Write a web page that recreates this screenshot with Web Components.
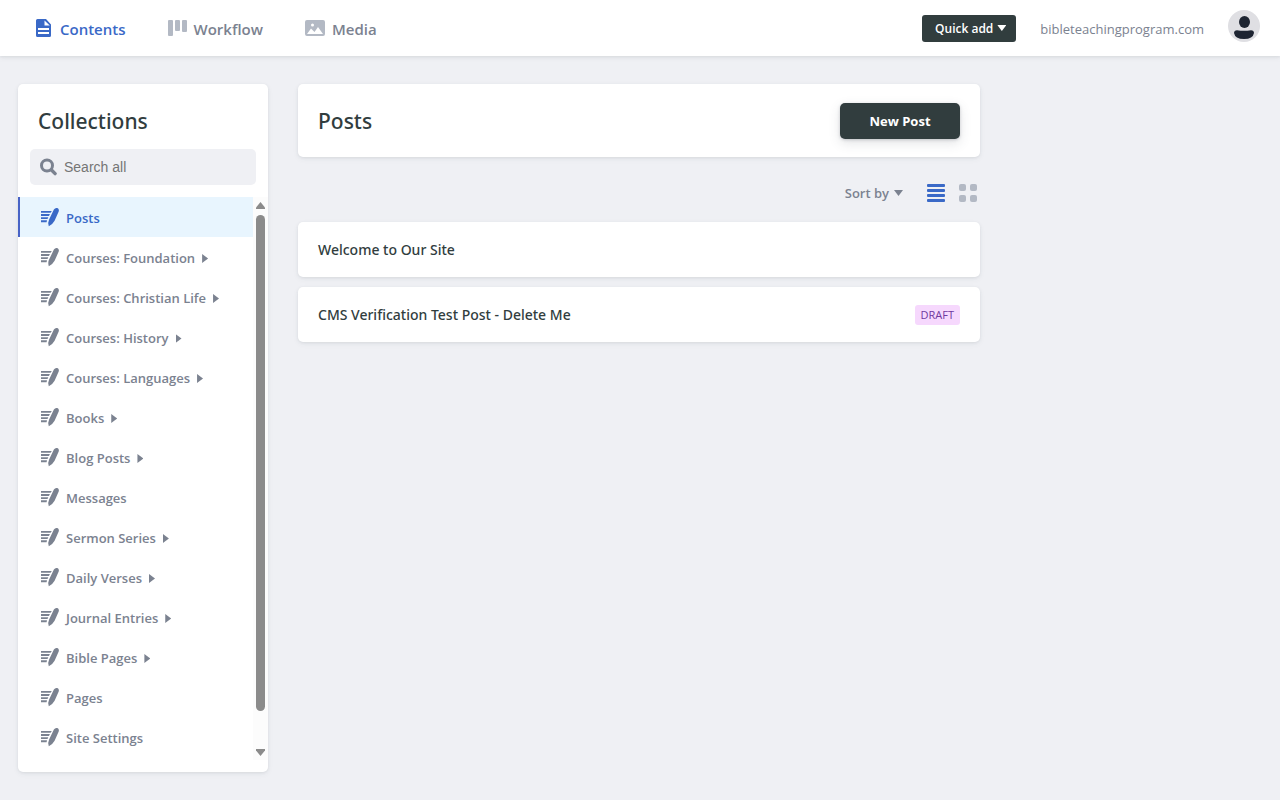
<!DOCTYPE html>
<html lang="en">
<head>
<meta charset="utf-8">
<meta name="viewport" content="width=device-width, initial-scale=1">
<title>Contents</title>
<style>
  :root {
    --font: "Open Sans", "Noto Sans", sans-serif;
    --font-medium: "Noto Sans", "Open Sans", sans-serif;
    --lead: #313d3e;
    --text: #7b8290;
    --muted: #b3b9c4;
    --active: #3a69c7;
    --active-bg: #e8f5fe;
    --bg: #eff0f4;
    --card-shadow: 0 2px 6px 0 rgba(68, 74, 87, 0.05), 0 1px 3px 0 rgba(68, 74, 87, 0.1);
  }

  body {
    margin: 0;
    background: var(--bg);
    color: var(--text);
    font-family: var(--font);
    font-size: 14px;
  }
</style>
</head>
<body>
<cms-app></cms-app>

<script>
const icons = {
    page: `<svg width="17" height="18" viewBox="0 0 17 18"><path fill="currentColor" fill-rule="evenodd" d="M2 0h8l5 5.500V16.500a1.500 1.500 0 0 1-1.500 1.500h-12A1.500 1.500 0 0 1 0 16.500v-15A1.500 1.500 0 0 1 1.500 0zM8.500 1.500V6.500H13.800zM2 9v2h11V9zM2 13v2h11v-2z"/></svg>`,
    workflow: `<svg width="19" height="18" viewBox="0 0 19 18" fill="currentColor"><rect x="0" y="1" width="5" height="16" rx="1"/><rect x="7" y="1" width="5" height="11" rx="1"/><rect x="14" y="1" width="5" height="12" rx="1"/></svg>`,
    media: `<svg width="20" height="18" viewBox="0 0 20 18"><path fill="currentColor" fill-rule="evenodd" d="M2 1h16a2 2 0 0 1 2 2v12a2 2 0 0 1-2 2H2a2 2 0 0 1-2-2V3a2 2 0 0 1 2-2zm5.500 3.500a1.500 1.500 0 1 0 0 3 1.500 1.500 0 0 0 0-3zM2 15h16l-5-7-3.500 5L6 9.500z"/></svg>`,
    write: `<svg width="20" height="20" viewBox="0 0 20 20"><path fill="currentColor" d="M1 3.900h10.800l-1.200 1.900H1zM1 7.100h8.900l-.9 1.900H1zM1 10.200h7.300l-.8 1.900H1zM1 13.300h6l-.4 1.900H1z"/><path fill="currentColor" d="M13.900 2.600Q15.300.4 17.200 1.100 19.500 2.100 18.700 4.600L14.600 13.800Q12.800 17.300 8.800 19.200 7.600 15.500 9.200 12.300z"/></svg>`,
    search: `<svg width="18" height="18" viewBox="0 0 18 18" fill="none" stroke="currentColor"><circle cx="7" cy="7.500" r="5.500" stroke-width="3"/><path d="M11.500 12l3.600 3.600" stroke-width="3.400" stroke-linecap="round"/></svg>`,
    list: `<svg width="18" height="18" viewBox="0 0 18 18" fill="currentColor"><rect width="18" height="3" rx="1"/><rect y="5" width="18" height="3" rx="1"/><rect y="10" width="18" height="3" rx="1"/><rect y="15" width="18" height="3" rx="1"/></svg>`,
    grid: `<svg width="18" height="18" viewBox="0 0 18 18" fill="currentColor"><rect width="7" height="7" rx="2"/><rect x="11" width="7" height="7" rx="2"/><rect y="11" width="7" height="7" rx="2"/><rect x="11" y="11" width="7" height="7" rx="2"/></svg>`,
    user: `<svg width="32" height="32" viewBox="0 0 32 32"><circle cx="16" cy="16" r="16" fill="#dfdfe3"/><ellipse cx="16.500" cy="12" rx="5.500" ry="6" fill="#1e2532"/><path fill="#1e2532" d="M6 23Q6 20.500 9 20.200 16 21.500 23 20.200 26 20.500 26 23 25 29 16 29T6 23z"/></svg>`
};

const baseStyle = `
    * { box-sizing: border-box; }
    :host { display: block; }
    svg { display: block; flex-shrink: 0; }
    h1, h2, ul { margin: 0; padding: 0; font-weight: 500; }
    h1, h2 { font-family: var(--font-medium); }
    button { font: inherit; border: 0; margin: 0; cursor: pointer; }
    a { color: inherit; text-decoration: none; }
    .caret-down::after, .caret-right::after {
      content: "";
      background: currentColor;
      flex-shrink: 0;
    }
    .caret-down::after { width: 9px; height: 6px; clip-path: polygon(0 0, 100% 0, 50% 100%); }
    .caret-right::after { width: 6px; height: 9px; clip-path: polygon(0 0, 100% 50%, 0 100%); }
`;

class CmsElement extends HTMLElement {
    constructor() {
        super();
        this.attachShadow({ mode: 'open' });
    }

    connectedCallback() {
        this.shadowRoot.innerHTML = `<style>${baseStyle}${this.styles()}</style>${this.render()}`;
    }

    styles() {
        return '';
    }

    render() {
        return '<slot></slot>';
    }
}

class CmsNavLink extends CmsElement {
    styles() {
        return `
      a {
        display: flex;
        align-items: center;
        height: 56px;
        font-size: 15px;
        line-height: 20px;
        font-weight: 600;
      }
      .icon { color: var(--muted); margin-right: 7px; }
      .label { padding-top: 2px; }
      :host([active]) a, :host([active]) .icon { color: var(--active); }
    `;
    }

    render() {
        const current = this.hasAttribute('active') ? 'aria-current="page"' : '';
        return `<a href="#${this.getAttribute('icon')}" ${current}>
      <span class="icon">${icons[this.getAttribute('icon')]}</span>
      <span class="label"><slot></slot></span>
    </a>`;
    }
}

class CmsHeader extends CmsElement {
    styles() {
        return `
      header {
        display: flex;
        justify-content: space-between;
        height: 56px;
        padding: 0 20px 0 36px;
        background: #fff;
        box-shadow: var(--card-shadow);
      }
      nav, .actions { display: flex; align-items: center; }
      nav { gap: 42px; }
      .actions { gap: 24px; }
      .quick {
        display: flex;
        align-items: center;
        gap: 4px;
        height: 27px;
        padding: 0 10px 0 13px;
        border-radius: 3px;
        background: var(--lead);
        color: #fff;
        font-size: 12px;
        font-weight: 600;
      }
      .site { font-size: 13px; line-height: 20px; padding-top: 2px; }
      .avatar { padding: 0 0 4px; background: none; }
    `;
    }

    render() {
        return `<header>
      <nav>
        <cms-nav-link icon="page" active>Contents</cms-nav-link>
        <cms-nav-link icon="workflow">Workflow</cms-nav-link>
        <cms-nav-link icon="media">Media</cms-nav-link>
      </nav>
      <div class="actions">
        <button class="quick caret-down" type="button">Quick add</button>
        <a class="site" href="#site">bibleteachingprogram.com</a>
        <button class="avatar" type="button" aria-label="Account">${icons.user}</button>
      </div>
    </header>`;
    }
}

class CmsCollection extends CmsElement {
    styles() {
        return `
      a {
        display: flex;
        align-items: center;
        height: 40px;
        padding: 0 12px 0 20px;
        border-left: 2px solid transparent;
        font-size: 13px;
        line-height: 20px;
        font-weight: 600;
      }
      .label { margin-left: 6px; padding-top: 2px; }
      .caret-right::after { margin: 3px 0 0 7px; }
      :host([active]) a {
        border-left-color: #4863c6;
        background: var(--active-bg);
        color: var(--active);
      }
    `;
    }

    render() {
        const caret = this.hasAttribute('nested') ? 'class="caret-right"' : '';
        return `<a href="#collection" ${caret}>${icons.write}<span class="label"><slot></slot></span></a>`;
    }
}

class CmsScrollbar extends CmsElement {
    styles() {
        return `
      :host {
        display: flex;
        flex-direction: column;
        align-items: center;
        width: 15px;
        flex-shrink: 0;
        padding: 5px 0 4px;
        background: #fcfcfc;
        color: #8b8b8b;
      }
      .rail { flex: 1; width: 9px; margin: 6px 0; }
      .thumb { height: 94%; border-radius: 5px; background: currentColor; }
    `;
    }

    render() {
        return `
      <svg width="9" height="7" viewBox="0 0 9 7"><path fill="currentColor" d="M4.500 0 9 5.500V7H0V5.500z"/></svg>
      <div class="rail"><div class="thumb"></div></div>
      <svg width="9" height="7" viewBox="0 0 9 7"><path fill="currentColor" d="M4.500 7 9 1.500V0H0V1.500z"/></svg>
    `;
    }
}

class CmsSidebar extends CmsElement {
    styles() {
        return `
      aside {
        display: flex;
        flex-direction: column;
        width: 250px;
        max-height: calc(100vh - 112px);
        padding: 23px 0 12px;
        border-radius: 5px;
        background: #fff;
        box-shadow: var(--card-shadow);
      }
      h2 {
        padding: 0 20px;
        color: var(--lead);
        font-size: 21px;
        line-height: 28px;
      }
      .search {
        display: flex;
        align-items: center;
        gap: 6px;
        height: 36px;
        margin: 14px 12px 12px;
        padding: 0 10px;
        border-radius: 5px;
        background: var(--bg);
        flex-shrink: 0;
      }
      input {
        flex: 1;
        min-width: 0;
        border: 0;
        outline: 0;
        padding: 0;
        background: none;
        font: 14px "Liberation Sans", sans-serif;
      }
      input::placeholder { color: #757575; }
      .scroll { display: flex; flex: 1; min-height: 0; }
      ul {
        flex: 1;
        padding-bottom: 3px;
        overflow-y: auto;
        scrollbar-width: none;
        list-style: none;
      }
    `;
    }

    render() {
        const collections = [
            ['Posts', 'active'],
            ['Courses: Foundation', 'nested'],
            ['Courses: Christian Life', 'nested'],
            ['Courses: History', 'nested'],
            ['Courses: Languages', 'nested'],
            ['Books', 'nested'],
            ['Blog Posts', 'nested'],
            ['Messages', ''],
            ['Sermon Series', 'nested'],
            ['Daily Verses', 'nested'],
            ['Journal Entries', 'nested'],
            ['Bible Pages', 'nested'],
            ['Pages', ''],
            ['Site Settings', '']
        ];

        return `<aside>
      <h2>Collections</h2>
      <label class="search">${icons.search}<input type="text" placeholder="Search all" aria-label="Search all"></label>
      <div class="scroll">
        <ul>${collections.map(([name, state]) => `<li><cms-collection ${state}>${name}</cms-collection></li>`).join('')}</ul>
        <cms-scrollbar></cms-scrollbar>
      </div>
    </aside>`;
    }
}

class CmsEntry extends CmsElement {
    styles() {
        return `
      a {
        display: flex;
        align-items: center;
        justify-content: space-between;
        padding: 16px 20px;
        border-radius: 5px;
        background: #fff;
        box-shadow: var(--card-shadow);
        color: var(--lead);
        font-family: var(--font-medium);
        font-size: 14px;
        line-height: 23px;
        font-weight: 500;
      }
      .badge {
        padding: 0 6px;
        border-radius: 3px;
        background: #f6d8fd;
        color: #70399f;
        font-family: var(--font);
        font-size: 11px;
        line-height: 20px;
        font-weight: 400;
      }
    `;
    }

    render() {
        const status = this.getAttribute('status');
        return `<a href="#entry"><slot></slot>${status ? `<span class="badge">${status}</span>` : ''}</a>`;
    }
}

class CmsEntries extends CmsElement {
    styles() {
        return `
      :host { flex: 1; min-width: 0; max-width: 682px; }
      .top {
        display: flex;
        align-items: center;
        justify-content: space-between;
        padding: 18px 20px;
        border-radius: 5px;
        background: #fff;
        box-shadow: var(--card-shadow);
      }
      h1 { padding-top: 2px; color: var(--lead); font-size: 21px; line-height: 35px; }
      .new {
        min-width: 120px;
        height: 36px;
        padding: 0 20px;
        border-radius: 5px;
        background: var(--lead);
        box-shadow: 0 4px 12px 0 rgba(68, 74, 87, 0.15), 0 1px 3px 0 rgba(68, 74, 87, 0.25);
        color: #fff;
        font-size: 13px;
        font-weight: 700;
      }
      .controls {
        display: flex;
        justify-content: flex-end;
        align-items: center;
        height: 32px;
        margin: 20px 0 13px;
        padding-right: 3px;
      }
      .controls button { padding: 0; background: none; }
      .controls .sort {
        display: flex;
        align-items: center;
        gap: 5px;
        color: var(--text);
        font-size: 13px;
        font-weight: 600;
      }
      .controls .list { margin: 0 14px 0 24px; color: var(--active); }
      .controls .grid { color: var(--muted); }
      .entries { display: flex; flex-direction: column; gap: 10px; }
    `;
    }

    render() {
        return `
      <div class="top">
        <h1>Posts</h1>
        <button class="new" type="button">New Post</button>
      </div>
      <div class="controls">
        <button class="sort caret-down" type="button">Sort by</button>
        <button class="list" type="button" aria-label="List view">${icons.list}</button>
        <button class="grid" type="button" aria-label="Grid view">${icons.grid}</button>
      </div>
      <div class="entries">
        <cms-entry>Welcome to Our Site</cms-entry>
        <cms-entry status="DRAFT">CMS Verification Test Post - Delete Me</cms-entry>
      </div>
    `;
    }
}

class CmsApp extends CmsElement {
    styles() {
        return `
      main {
        display: flex;
        align-items: flex-start;
        gap: 30px;
        max-width: 1440px;
        margin: 0 auto;
        padding: 28px 18px;
      }
    `;
    }

    render() {
        return `
      <cms-header></cms-header>
      <main>
        <cms-sidebar></cms-sidebar>
        <cms-entries></cms-entries>
      </main>
    `;
    }
}

customElements.define('cms-nav-link', CmsNavLink);
customElements.define('cms-header', CmsHeader);
customElements.define('cms-collection', CmsCollection);
customElements.define('cms-scrollbar', CmsScrollbar);
customElements.define('cms-sidebar', CmsSidebar);
customElements.define('cms-entry', CmsEntry);
customElements.define('cms-entries', CmsEntries);
customElements.define('cms-app', CmsApp);
</script>
</body>
</html>
